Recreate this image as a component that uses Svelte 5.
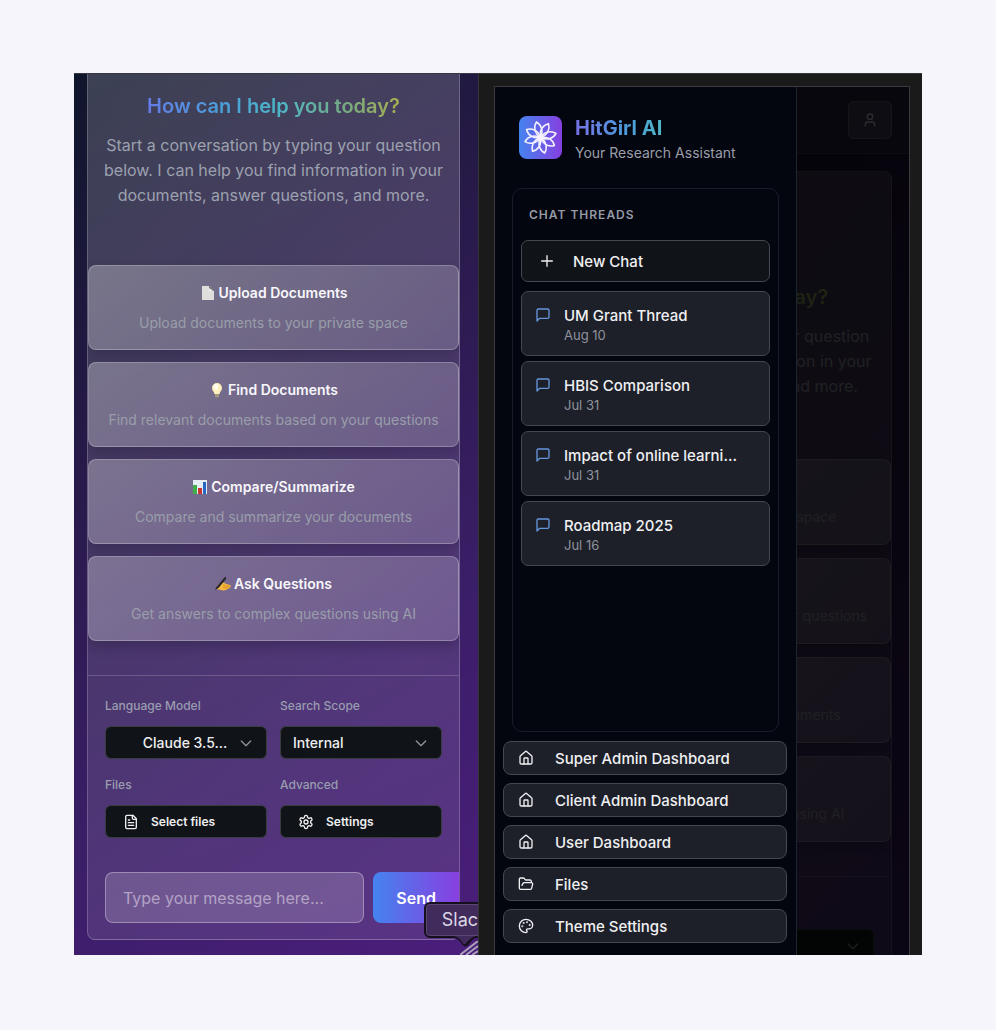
<script lang="ts">
    type Option = { icon: string; title: string; text: string };

    const options: Option[] = [
        { icon: "page", title: "Upload Documents", text: "Upload documents to your private space" },
        { icon: "bulb", title: "Find Documents", text: "Find relevant documents based on your questions" },
        { icon: "chart", title: "Compare/Summarize", text: "Compare and summarize your documents" },
        { icon: "hand", title: "Ask Questions", text: "Get answers to complex questions using AI" },
    ];

    const threads = [
        { title: "UM Grant Thread", date: "Aug 10" },
        { title: "HBIS Comparison", date: "Jul 31" },
        { title: "Impact of online learni...", date: "Jul 31" },
        { title: "Roadmap 2025", date: "Jul 16" },
    ];

    const links = [
        { icon: "home", label: "Super Admin Dashboard" },
        { icon: "home", label: "Client Admin Dashboard" },
        { icon: "home", label: "User Dashboard" },
        { icon: "folder", label: "Files" },
        { icon: "palette", label: "Theme Settings" },
    ];

    const petals = [30, 75, 120, 165, 210, 255, 300, 345];

    let message = "";
</script>

{#snippet icon(name: string)}
    <svg class="icon" viewBox="0 0 24 24" fill="none" stroke="currentColor" stroke-width="2" stroke-linecap="round" stroke-linejoin="round" aria-hidden="true">
        {#if name === "home"}
            <path d="M15 21v-8a1 1 0 0 0-1-1h-4a1 1 0 0 0-1 1v8" />
            <path d="M3 10a2 2 0 0 1 .709-1.528l7-6a2 2 0 0 1 2.582 0l7 6A2 2 0 0 1 21 10v9a2 2 0 0 1-2 2H5a2 2 0 0 1-2-2z" />
        {:else if name === "folder"}
            <path d="m6 14 1.5-2.9A2 2 0 0 1 9.24 10H20a2 2 0 0 1 1.94 2.5l-1.54 6a2 2 0 0 1-1.95 1.5H4a2 2 0 0 1-2-2V5a2 2 0 0 1 2-2h3.9a2 2 0 0 1 1.69.9l.81 1.2a2 2 0 0 0 1.67.9H18a2 2 0 0 1 2 2v2" />
        {:else if name === "palette"}
            <path d="M12 2C6.5 2 2 6.5 2 12s4.5 10 10 10c.926 0 1.648-.746 1.648-1.688 0-.437-.18-.835-.437-1.125-.29-.289-.438-.652-.438-1.125a1.64 1.64 0 0 1 1.668-1.668h1.996c3.051 0 5.555-2.503 5.555-5.554C21.965 6.012 17.461 2 12 2z" />
            <circle cx="13.5" cy="6.5" r=".5" fill="currentColor" />
            <circle cx="17.5" cy="10.5" r=".5" fill="currentColor" />
            <circle cx="8.5" cy="7.5" r=".5" fill="currentColor" />
            <circle cx="6.5" cy="12.5" r=".5" fill="currentColor" />
        {:else if name === "message"}
            <path d="M21 15a2 2 0 0 1-2 2H7l-4 4V5a2 2 0 0 1 2-2h14a2 2 0 0 1 2 2z" />
        {:else if name === "plus"}
            <path d="M4 12h16M12 4v16" />
        {:else if name === "chevron"}
            <path d="m5 9 7 7 7-7" />
        {:else if name === "user"}
            <path d="M19 21v-2a4 4 0 0 0-4-4H9a4 4 0 0 0-4 4v2" />
            <circle cx="12" cy="7" r="4" />
        {:else if name === "file"}
            <path d="M15 2H6a2 2 0 0 0-2 2v16a2 2 0 0 0 2 2h12a2 2 0 0 0 2-2V7z" />
            <path d="M14 2v4a2 2 0 0 0 2 2h4M10 9H8M16 13H8M16 17H8" />
        {:else if name === "gear"}
            <path d="M12.22 2h-.44a2 2 0 0 0-2 2v.18a2 2 0 0 1-1 1.73l-.43.25a2 2 0 0 1-2 0l-.15-.08a2 2 0 0 0-2.73.73l-.22.38a2 2 0 0 0 .73 2.73l.15.1a2 2 0 0 1 1 1.72v.51a2 2 0 0 1-1 1.74l-.15.09a2 2 0 0 0-.73 2.73l.22.38a2 2 0 0 0 2.73.73l.15-.08a2 2 0 0 1 2 0l.43.25a2 2 0 0 1 1 1.73V20a2 2 0 0 0 2 2h.44a2 2 0 0 0 2-2v-.18a2 2 0 0 1 1-1.73l.43-.25a2 2 0 0 1 2 0l.15.08a2 2 0 0 0 2.73-.73l.22-.39a2 2 0 0 0-.73-2.73l-.15-.08a2 2 0 0 1-1-1.74v-.5a2 2 0 0 1 1-1.74l.15-.09a2 2 0 0 0 .73-2.73l-.22-.38a2 2 0 0 0-2.73-.73l-.15.08a2 2 0 0 1-2 0l-.43-.25a2 2 0 0 1-1-1.73V4a2 2 0 0 0-2-2z" />
            <circle cx="12" cy="12" r="3" />
        {/if}
    </svg>
{/snippet}

{#snippet emoji(name: string)}
    <svg class="emoji" viewBox="0 0 16 16" aria-hidden="true">
        {#if name === "page"}
            <path d="M2 1h7l5 5v9H2z" fill="#dededc" />
            <path d="M9 1v5h5z" fill="#6f706c" />
            <path d="M9 3v3h4z" fill="#f4f4f2" />
        {:else if name === "bulb"}
            <path d="M8 1a5 5 0 0 0-5 5c0 2.500 2 3.500 2.500 6h5C11 9.500 13 8.500 13 6a5 5 0 0 0-5-5z" fill="#fdf0bd" />
            <ellipse cx="7" cy="5" rx="2.500" ry="3" fill="#fffdf0" />
            <path d="M6 12h4v2.500l-1 1H7l-1-1z" fill="#a1977f" />
        {:else if name === "chart"}
            <path d="M1 1h14v14H1z" fill="#e5ecf2" />
            <path d="M1 6h4v9H1z" fill="#3fae49" />
            <path d="M6 9h4v6H6z" fill="#c8342f" />
            <path d="M11 3h3v12h-3z" fill="#2467c4" />
        {:else}
            <path d="M2 11c1-3 4-5 7-4.500l2 1.500 4 1c1.500.5 1 2 0 2.500l-3 2c-3 1.500-5 1-7 0l-3 0z" fill="#f6b73c" />
            <path d="m8 9 3 1 4 .5M8 11.500l5 .5" fill="none" stroke="#c57f1c" stroke-width=".7" />
            <path d="m0 14 1.500-3L9 2l2-1.500V3l-7.500 9z" fill="#25262b" />
        {/if}
    </svg>
{/snippet}

{#snippet intro()}
    <header class="intro">
        <h1 class="rainbow">How can I help you today?</h1>
        <p>Start a conversation by typing your question below. I can help you find information in your documents, answer questions, and more.</p>
    </header>
    <div class="options">
        {#each options as option}
            <button class="option">
                <span class="option_title">{@render emoji(option.icon)}{option.title}</span>
                <span class="option_text">{option.text}</span>
            </button>
        {/each}
    </div>
{/snippet}

{#snippet scopeSelect(id: string)}
    <div class="select_wrap">
        <select {id}>
            <option>Internal</option>
        </select>
        {@render icon("chevron")}
    </div>
{/snippet}

<main class="stage">
    <section class="desktop">
        <div class="chat">
            {@render intro()}
            <div class="controls">
                <div class="field">
                    <label for="model">Language Model</label>
                    <div class="select_wrap model">
                        <select id="model">
                            <option>Claude 3.5...</option>
                        </select>
                        {@render icon("chevron")}
                    </div>
                </div>
                <div class="field">
                    <label for="scope">Search Scope</label>
                    {@render scopeSelect("scope")}
                </div>
                <div class="field">
                    <label for="files">Files</label>
                    <button class="tool" id="files">{@render icon("file")}Select files</button>
                </div>
                <div class="field">
                    <label for="advanced">Advanced</label>
                    <button class="tool" id="advanced">{@render icon("gear")}Settings</button>
                </div>
            </div>
            <form class="composer" on:submit|preventDefault={() => (message = "")}>
                <input type="text" aria-label="Message" placeholder="Type your message here..." bind:value={message} />
                <button class="send">Send</button>
            </form>
        </div>

        <svg class="grip" viewBox="0 0 18 14" aria-hidden="true">
            <path d="M0 14 18 0M6 14 18 5M12 14l6-4" fill="none" stroke="#aaa0b8" stroke-width="2" />
        </svg>
        <div class="tooltip">
            Slack
            <svg viewBox="0 0 26 12" aria-hidden="true">
                <path d="M0 0h26v2c-4 0-5 1-8 5-3 4-5 5-8 1C7 4 5 2 0 2z" fill="#16101e" />
                <path d="M2 0h22c-4 1-6 3-9 6-2 3-3 3-5 0C8 3 6 1 2 0z" fill="#412b5c" />
            </svg>
        </div>
    </section>

    <section class="bezel">
        <div class="phone">
            <div class="page">
                <div class="topbar">
                    <button class="account" aria-label="Account">{@render icon("user")}</button>
                </div>
                <div class="chat">
                    {@render intro()}
                    <div class="controls">
                        <span></span>
                        <div class="field">
                            <label for="phone_scope">Search Scope</label>
                            {@render scopeSelect("phone_scope")}
                        </div>
                    </div>
                </div>
            </div>

            <aside class="drawer">
                <div class="brand">
                    <svg class="logo" viewBox="0 0 43 43" aria-hidden="true">
                        <defs>
                            <linearGradient id="logo_fill">
                                <stop offset="0" stop-color="#4583ef" />
                                <stop offset="1" stop-color="#863fe0" />
                            </linearGradient>
                        </defs>
                        <rect width="43" height="43" rx="8" fill="url(#logo_fill)" />
                        <g fill="none" stroke="#f5f3ff" stroke-width="1.500">
                            {#each petals as angle}
                                <path d="M21.500 21.500C16.500 16 17.500 9 21.500 5.500 25.500 9 26.500 16 21.500 21.500z" transform="rotate({angle} 21.5 21.5)" />
                            {/each}
                        </g>
                        <circle cx="21.500" cy="21.500" r="2.500" fill="#f5f3ff" />
                    </svg>
                    <div>
                        <h2 class="name">HitGirl AI</h2>
                        <p>Your Research Assistant</p>
                    </div>
                </div>

                <div class="threads">
                    <h3>Chat Threads</h3>
                    <button class="new_chat">{@render icon("plus")}New Chat</button>
                    {#each threads as thread}
                        <button class="thread">
                            {@render icon("message")}
                            <span>
                                <strong>{thread.title}</strong>
                                <small>{thread.date}</small>
                            </span>
                        </button>
                    {/each}
                </div>

                <nav>
                    {#each links as link}
                        <a href="#top">{@render icon(link.icon)}{link.label}</a>
                    {/each}
                </nav>
            </aside>
        </div>
    </section>
</main>

<style>
    :global(body) {
        margin: 0;
        background: #f5f5fb;
    }

    * {
        box-sizing: border-box;
    }

    h1, h2, h3, p {
        margin: 0;
    }

    button, input, select {
        margin: 0;
        font-family: inherit;
    }

    button, a, select {
        cursor: pointer;
    }

    .stage {
        display: grid;
        grid-template-columns: 404fr 444fr;
        padding: 73px 74px;
        font-family: Inter, "Liberation Sans", sans-serif;
        color: #f3f3f6;
    }

    .icon {
        flex: none;
        width: 16px;
        height: 16px;
    }

    .desktop {
        position: relative;
        overflow: hidden;
        padding: 0 18px 15px 13px;
        border-top: 1px solid #353840;
        background: linear-gradient(145deg, #0f162b 0%, #281a4a 35%, #3b1e68 68%, #4b1e7c 100%);
    }

    .chat {
        overflow: hidden;
        border: 1px solid rgba(255, 255, 255, 0.2);
        border-top: 0;
        border-radius: 0 0 8px 8px;
        background: linear-gradient(160deg, rgba(255, 255, 255, 0.19), rgba(255, 255, 255, 0.13) 50%, rgba(255, 255, 255, 0.09));
    }

    .intro {
        padding: 18px 12px 57px;
        text-align: center;
    }

    .rainbow {
        width: fit-content;
        margin: 0 auto 13px;
        font-size: 20px;
        line-height: 28px;
        font-weight: 600;
        color: transparent;
        background: linear-gradient(90deg, #647be6, #4aa0d8 30%, #4db7c8 52%, #75aa83 78%, #a9ae50);
        background-clip: text;
    }

    .intro p {
        font-size: 16px;
        line-height: 25px;
        color: #9ca1af;
    }

    .options {
        display: flex;
        flex-direction: column;
        gap: 12px;
        padding-bottom: 34px;
    }

    .option {
        display: flex;
        flex-direction: column;
        align-items: center;
        gap: 10px;
        padding: 17px 4px 16px;
        border: 1px solid rgba(255, 255, 255, 0.24);
        border-radius: 8px;
        background: linear-gradient(135deg, rgba(255, 255, 255, 0.29), rgba(255, 255, 255, 0.17));
        box-shadow: 0 6px 12px rgba(20, 10, 40, 0.25);
        color: #f8f7fb;
        line-height: 20px;
    }

    .option_title {
        display: flex;
        align-items: center;
        gap: 3px;
        font-size: 14px;
        font-weight: 600;
    }

    .emoji {
        width: 16px;
        height: 16px;
    }

    .option_text {
        font-size: 14px;
        color: #999eaa;
    }

    .controls {
        display: grid;
        grid-template-columns: 1fr 1fr;
        gap: 16px 13px;
        padding: 20px 17px 34px;
        border-top: 1px solid rgba(255, 255, 255, 0.18);
    }

    .field {
        display: flex;
        flex-direction: column;
        gap: 10px;
    }

    .field label {
        font-size: 12px;
        line-height: 20px;
        font-weight: 500;
        color: #999daf;
    }

    .select_wrap {
        position: relative;
    }

    .select_wrap .icon {
        position: absolute;
        right: 13px;
        top: 9px;
        color: #90929a;
        pointer-events: none;
    }

    select, .tool {
        width: 100%;
        height: 33px;
        border: 1px solid #3a3d40;
        border-radius: 6px;
        background: #101418;
        color: #eeeef0;
    }

    select {
        appearance: none;
        padding: 0 36px 0 12px;
        font-size: 14px;
        font-weight: 500;
    }

    .model select {
        padding-left: 34px;
        text-align: center;
    }

    .tool {
        display: flex;
        align-items: center;
        gap: 12px;
        padding: 0 17px;
        font-size: 12px;
        font-weight: 600;
    }

    .composer {
        display: flex;
        gap: 9px;
        padding: 0 0 16px 17px;
    }

    .composer input {
        flex: 1;
        min-width: 0;
        height: 51px;
        padding: 0 17px;
        border: 1px solid rgba(255, 255, 255, 0.32);
        border-radius: 8px;
        background: rgba(255, 255, 255, 0.17);
        color: #ffffff;
        font-size: 16px;
    }

    .composer input::placeholder {
        color: #b3a3c5;
    }

    .send {
        padding: 0 23px;
        border: 0;
        border-radius: 8px 0 0 8px;
        background: linear-gradient(90deg, #4583ef, #883fe0);
        color: #ffffff;
        font-size: 16px;
        font-weight: 600;
    }

    /* floating things in the corner of the window */
    .grip {
        position: absolute;
        right: 0;
        bottom: 0;
        width: 18px;
        height: 14px;
    }

    .tooltip {
        position: absolute;
        right: -24px;
        bottom: 17px;
        padding: 0 12px 0 16px;
        border: 2px solid #16101e;
        border-radius: 6px;
        background: #412b5c;
        box-shadow: inset 0 0 0 1px #5a4670;
        color: #dcd8e2;
        font-size: 18px;
        line-height: 32px;
    }

    .tooltip svg {
        position: absolute;
        left: 26px;
        top: 100%;
        width: 26px;
        height: 12px;
    }

    .bezel {
        display: flex;
        padding: 12px 12px 0 15px;
        border-top: 1px solid #353537;
        border-left: 1px solid #353537;
        background: #1a1a1b;
    }

    .phone {
        flex: 1;
        display: grid;
        overflow: hidden;
        border: 1px solid #3a3a3f;
        border-bottom: 0;
        background: #03040f;
    }

    .page, .drawer {
        grid-area: 1 / 1;
    }

    /* the page under the open drawer, cut off at the bottom of the phone */
    .page {
        position: relative;
        height: 0;
        min-height: 100%;
        overflow: hidden;
        background: linear-gradient(145deg, #0d172a 0%, #24183f 35%, #3b1e68 100%);
    }

    .page::after {
        content: "";
        position: absolute;
        inset: 0;
        background: rgba(0, 0, 0, 0.8);
    }

    .page .chat {
        margin: 17px 17px 0;
        border-top: 1px solid rgba(255, 255, 255, 0.2);
        border-radius: 8px;
    }

    .page .intro {
        padding: 111px 18px 60px;
    }

    .page .options {
        gap: 13px;
    }

    .page .option {
        padding: 17px 4px;
    }

    .page .controls {
        padding-top: 22px;
    }

    .topbar {
        display: flex;
        justify-content: flex-end;
        padding: 14px 17px;
        border-bottom: 1px solid rgba(255, 255, 255, 0.14);
        background: rgba(255, 255, 255, 0.06);
    }

    .account {
        display: flex;
        align-items: center;
        justify-content: center;
        width: 44px;
        height: 38px;
        border: 1px solid rgba(255, 255, 255, 0.2);
        border-radius: 6px;
        background: rgba(255, 255, 255, 0.14);
        color: #d8d8dd;
    }

    .drawer {
        position: relative;
        display: flex;
        flex-direction: column;
        width: 73%;
        padding: 29px 9px 12px 8px;
        border-right: 1px solid #1d2531;
        background: #03050f;
    }

    .brand {
        display: flex;
        align-items: flex-start;
        gap: 13px;
        padding: 0 16px 22px;
    }

    .logo {
        flex: none;
        width: 43px;
        height: 43px;
    }

    .name {
        width: fit-content;
        font-size: 20px;
        line-height: 24px;
        font-weight: 700;
        color: transparent;
        background: linear-gradient(90deg, #7673e6, #4a9bd9 60%, #4fb6c6);
        background-clip: text;
    }

    .brand p {
        font-size: 14px;
        line-height: 26px;
        color: #9b9ea8;
    }

    .threads {
        flex: 1;
        display: flex;
        flex-direction: column;
        gap: 5px;
        margin: 0 8px 9px 9px;
        padding: 16px 8px;
        border: 1px solid #171e29;
        border-radius: 10px;
    }

    .threads h3 {
        padding: 0 8px 10px;
        font-size: 12px;
        line-height: 20px;
        font-weight: 600;
        letter-spacing: 1px;
        text-transform: uppercase;
        color: #969aa4;
    }

    .new_chat, .thread, nav a {
        display: flex;
        border: 1px solid #454850;
        border-radius: 7px;
        background: #1d2029;
        color: #f0f0f2;
        text-align: left;
    }

    .new_chat {
        align-items: center;
        gap: 18px;
        height: 42px;
        margin-bottom: 4px;
        padding: 0 17px;
        background: #101418;
        font-size: 15px;
        font-weight: 500;
    }

    .thread {
        gap: 13px;
        height: 65px;
        padding: 14px 13px;
    }

    .thread .icon {
        margin-top: 1px;
        color: #6496dc;
    }

    .thread strong, .thread small {
        display: block;
        white-space: nowrap;
    }

    .thread strong {
        font-size: 15px;
        line-height: 20px;
        font-weight: 500;
    }

    .thread small {
        font-size: 13px;
        line-height: 18px;
        color: #8f929c;
    }

    nav {
        display: flex;
        flex-direction: column;
        gap: 8px;
    }

    nav a {
        align-items: center;
        gap: 21px;
        height: 34px;
        padding: 0 14px;
        border-radius: 8px;
        font-size: 15px;
        font-weight: 500;
        text-decoration: none;
    }
</style>
